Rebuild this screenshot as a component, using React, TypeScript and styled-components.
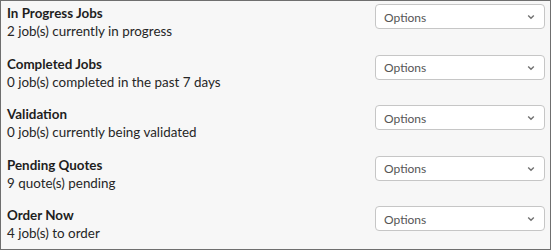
import React from "react";
import styled, { createGlobalStyle } from "styled-components";

const Global = createGlobalStyle`
  html, body { margin: 0; padding: 0; background: #ffffff; }
  body { font-family: Lato, "Open Sans", sans-serif; }
`;

const Panel = styled.div`
  box-sizing: border-box;
  width: 551px;
  height: 250px;
  background: #f7f7f7;
  border: 1px solid #6f6f6f;
  padding: 3px 5px 0 6px;
  display: flex;
  flex-direction: column;
`;

const Row = styled.div`
  display: flex;
  justify-content: space-between;
  align-items: flex-start;
  height: 50.5px;
  flex-shrink: 0;
`;

const Info = styled.div`
  display: flex;
  flex-direction: column;
`;

const Title = styled.div`
  font-size: 13.4px;
  line-height: 18px;
  font-weight: 700;
  color: #1e1e1e;
`;

const Desc = styled.div`
  font-size: 13.4px;
  line-height: 18px;
  color: #262626;
`;

const Select = styled.div`
  box-sizing: border-box;
  width: 170px;
  height: 25px;
  background: #ffffff;
  border: 1px solid #c6c6c6;
  border-radius: 4px;
  display: flex;
  align-items: center;
  justify-content: space-between;
  padding: 1px 9px 0 8px;
  font-size: 12px;
  color: #555555;
`;

const Chevron = () => (
  <svg width="8" height="6" viewBox="0 0 8 6">
    <path d="M1.2 1.5 L4 4.2 L6.8 1.5" fill="none" stroke="#707070" strokeWidth="1.4" />
  </svg>
);

const items = [
  { title: "In Progress Jobs", desc: "2 job(s) currently in progress" },
  { title: "Completed Jobs", desc: "0 job(s) completed in the past 7 days" },
  { title: "Validation", desc: "0 job(s) currently being validated" },
  { title: "Pending Quotes", desc: "9 quote(s) pending" },
  { title: "Order Now", desc: "4 job(s) to order" },
];

export default function App() {
  return (
    <>
      <Global />
      <Panel>
        {items.map((it) => (
          <Row key={it.title}>
            <Info>
              <Title>{it.title}</Title>
              <Desc>{it.desc}</Desc>
            </Info>
            <Select>
              <span>Options</span>
              <Chevron />
            </Select>
          </Row>
        ))}
      </Panel>
    </>
  );
}
